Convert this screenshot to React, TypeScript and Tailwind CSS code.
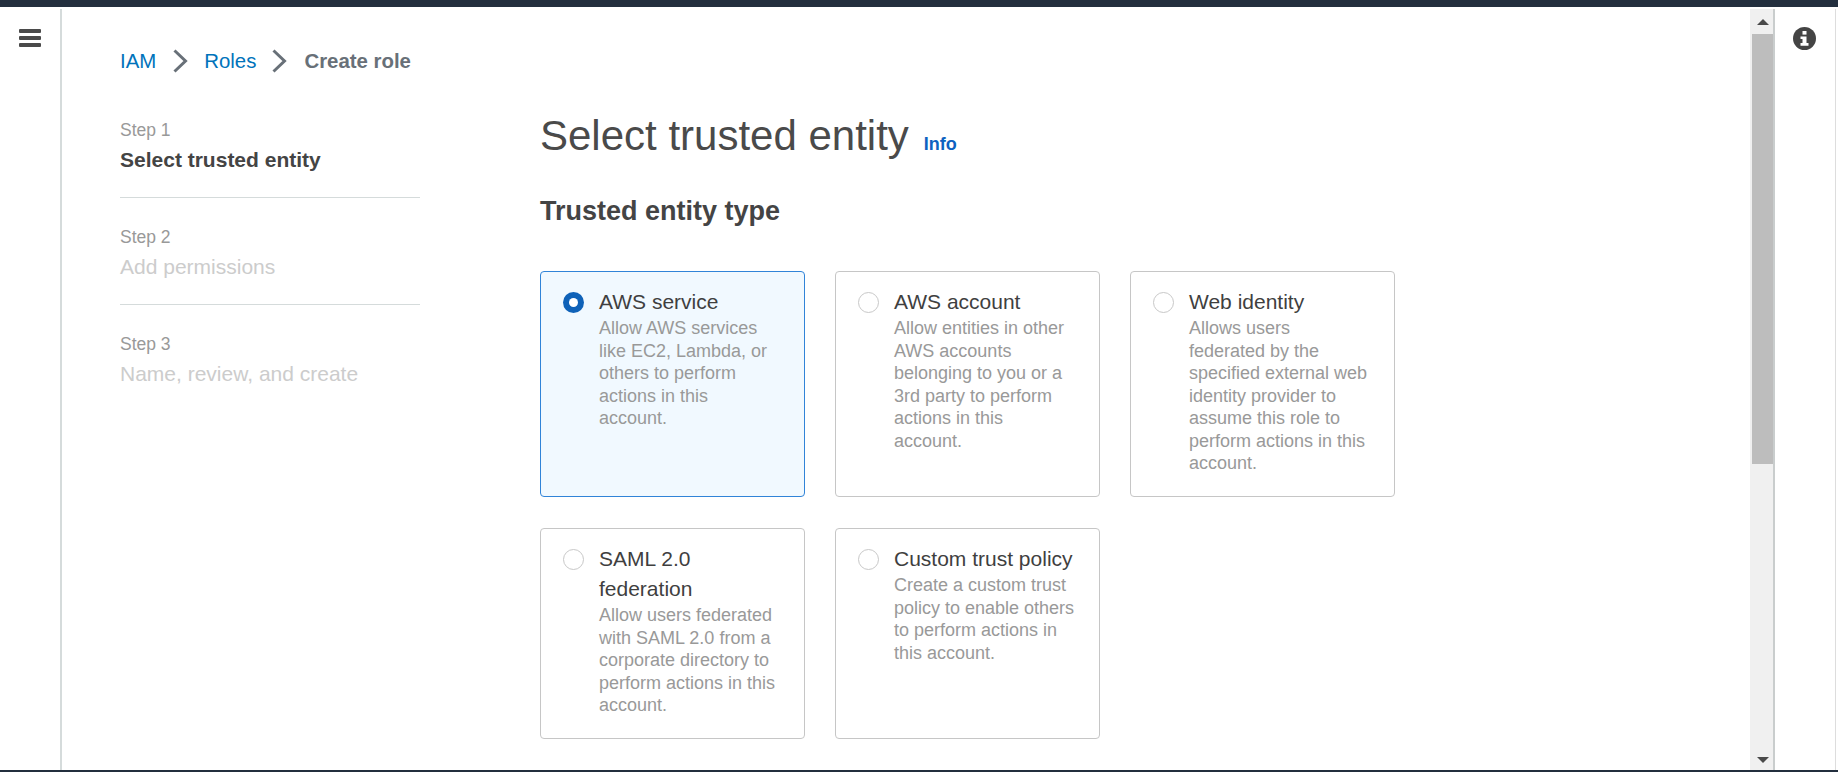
import React from "react";

interface EntityOption {
  title: string;
  description: string;
  selected?: boolean;
}

const options: EntityOption[] = [
  {
    title: "AWS service",
    description: "Allow AWS services like EC2, Lambda, or others to perform actions in this account.",
    selected: true,
  },
  {
    title: "AWS account",
    description: "Allow entities in other AWS accounts belonging to you or a 3rd party to perform actions in this account.",
  },
  {
    title: "Web identity",
    description: "Allows users federated by the specified external web identity provider to assume this role to perform actions in this account.",
  },
  {
    title: "SAML 2.0 federation",
    description: "Allow users federated with SAML 2.0 from a corporate directory to perform actions in this account.",
  },
  {
    title: "Custom trust policy",
    description: "Create a custom trust policy to enable others to perform actions in this account.",
  },
];

const steps = [
  { label: "Step 1", name: "Select trusted entity", active: true },
  { label: "Step 2", name: "Add permissions" },
  { label: "Step 3", name: "Name, review, and create" },
];

function Chevron() {
  return (
    <svg width="15" height="24" viewBox="0 0 15 24" fill="none" className="shrink-0">
      <path d="M1.5 1.5 L12.5 12 L1.5 22.5" stroke="#687078" strokeWidth="3" />
    </svg>
  );
}

function Radio({ selected }: { selected?: boolean }) {
  if (selected) {
    return (
      <span className="mt-[5px] flex h-[21px] w-[21px] shrink-0 items-center justify-center rounded-full bg-[#0f62b8]">
        <span className="h-[9px] w-[9px] rounded-full bg-white" />
      </span>
    );
  }
  return <span className="mt-[5px] h-[21px] w-[21px] shrink-0 rounded-full border-[1.5px] border-[#c8c8c8] bg-white" />;
}

function EntityCard({ option }: { option: EntityOption }) {
  const tone = option.selected ? "border-[#3184d8] bg-[#f1f9ff]" : "border-[#c6c6c6] bg-white";
  return (
    <div className={`flex gap-[15px] rounded-[4px] border pl-[22px] pr-[24px] pt-[15px] ${tone}`}>
      <Radio selected={option.selected} />
      <div className="min-w-0">
        <div className="text-[21px] leading-[30px] text-[#3f3f3f]">{option.title}</div>
        <p className="text-[18px] leading-[22.5px] text-[#999999]">{option.description}</p>
      </div>
    </div>
  );
}

function Scrollbar() {
  return (
    <div className="flex w-[23px] shrink-0 flex-col bg-[#f0f0f0]">
      <div className="flex h-[25px] items-center justify-center pl-[3px]">
        <div className="h-0 w-0 border-x-[6px] border-b-[6px] border-x-transparent border-b-[#4a4a4a]" />
      </div>
      <div className="ml-[2px] h-[430px] bg-[#bdbdbd]" />
      <div className="flex flex-1 items-end justify-center pb-[7px] pl-[3px]">
        <div className="h-0 w-0 border-x-[6px] border-t-[6px] border-x-transparent border-t-[#4a4a4a]" />
      </div>
    </div>
  );
}

export default function App() {
  return (
    <div className="flex h-[772px] w-[1838px] flex-col overflow-hidden bg-white font-['Liberation_Sans',Arial,sans-serif]">
      <div className="h-[7px] shrink-0 bg-[#232f3e]" />
      <div className="flex min-h-0 flex-1 pt-[2px]">
        <nav className="w-[62px] shrink-0 border-r-2 border-[#d5dbdb] pl-[19px] pt-[20px]">
          <div className="flex w-[22px] flex-col gap-[3px]">
            <span className="h-[4px] rounded-[1px] bg-[#4a4a4a]" />
            <span className="h-[4px] rounded-[1px] bg-[#4a4a4a]" />
            <span className="h-[4px] rounded-[1px] bg-[#4a4a4a]" />
          </div>
        </nav>

        <main className="min-w-0 flex-1 overflow-hidden pl-[58px] pt-[40px]">
          <div className="flex h-[24px] items-center text-[20.4px]">
            <span className="text-[#0073bb]">IAM</span>
            <span className="ml-[17px] mr-[16px]"><Chevron /></span>
            <span className="text-[#0073bb]">Roles</span>
            <span className="ml-[16px] mr-[17px]"><Chevron /></span>
            <span className="font-bold text-[#687078]">Create role</span>
          </div>

          <div className="mt-[18px] flex">
            <ol className="w-[300px] shrink-0">
              {steps.map((step, index) => (
                <li key={step.label} className={`h-[107px] pt-[28px] ${index < 2 ? "border-b border-[#d5dbdb]" : ""}`}>
                  <div className="text-[17.5px] leading-[22px] text-[#999999]">{step.label}</div>
                  <div className={`mt-[7px] text-[21px] leading-[24px] ${step.active ? "font-bold text-[#444444]" : "text-[#cccccc]"}`}>
                    {step.name}
                  </div>
                </li>
              ))}
            </ol>

            <section className="ml-[120px] mt-[20px] min-w-0">
              <div className="flex items-baseline">
                <h1 className="text-[42px] leading-[50px] text-[#4a4a4a]">Select trusted entity</h1>
                <a className="ml-[15px] text-[18px] font-bold text-[#0d62c0]">Info</a>
              </div>
              <h2 className="mt-[34px] text-[27px] font-bold leading-[32px] text-[#444444]">Trusted entity type</h2>
              <div className="mt-[44px] grid grid-cols-[265px_265px_265px] grid-rows-[226px_211px] gap-x-[30px] gap-y-[31px]">
                {options.map((option) => (
                  <EntityCard key={option.title} option={option} />
                ))}
              </div>
            </section>
          </div>
        </main>

        <Scrollbar />

        <aside className="w-[62px] shrink-0 border-l-2 border-[#c9cdcd] pl-[18px] pt-[18px]">
          <svg width="23" height="23" viewBox="0 0 23 23">
            <circle cx="11.5" cy="11.5" r="11.5" fill="#444444" />
            <rect x="9.5" y="4" width="4" height="3.6" fill="#ffffff" />
            <path d="M7.5 9.5 H13.5 V16 H15.5 V18.8 H7.5 V16 H9.5 V12 H7.5 Z" fill="#ffffff" />
          </svg>
        </aside>
        <div className="w-[3px] shrink-0 border-l border-[#dddddd]" />
      </div>
      <div className="h-[2px] shrink-0 bg-[#232f3e]" />
    </div>
  );
}
